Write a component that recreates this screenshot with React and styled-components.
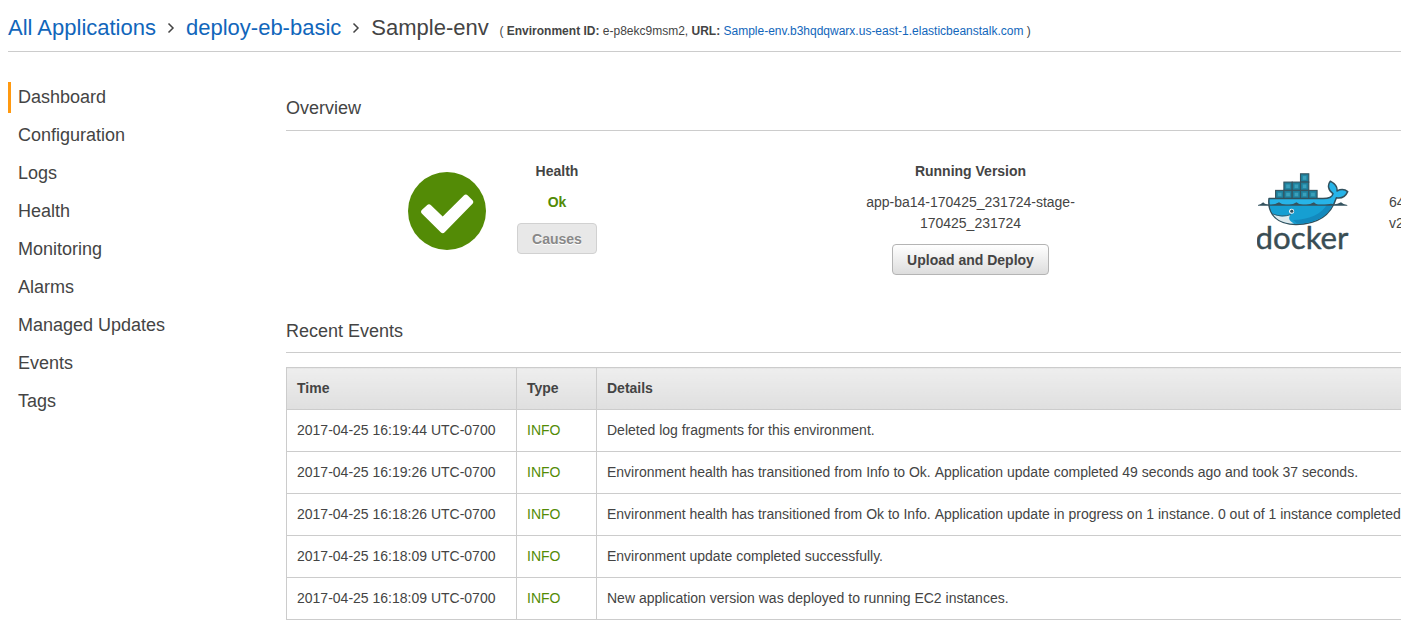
import React from 'react';
import styled, { createGlobalStyle, css } from 'styled-components';

const GREEN = '#538b06';

const GlobalStyle = createGlobalStyle`
  * { box-sizing: border-box; }
  html, body { margin: 0; padding: 0; background: #fff; overflow: hidden; }
  body {
    font-family: "Liberation Sans", Arial, Helvetica, sans-serif;
    font-size: 14px;
    line-height: 21px;
    color: #444;
  }
`;

const Page = styled.div`
  height: 631px;
  padding-left: 8px;
  overflow: hidden;
`;

const Header = styled.header`
  display: flex;
  align-items: baseline;
  height: 52px;
  padding-top: 13px;
  border-bottom: 1px solid #ccc;
  font-size: 22px;
  line-height: 30px;
  white-space: nowrap;
`;

const Link = styled.a`
  color: #1166bb;
  text-decoration: none;
`;

const Separator = styled.svg`
  width: 8px;
  height: 12px;
  margin: 0 11px;
  transform: translateY(-1px);
  fill: none;
  stroke: #444;
  stroke-width: 1.5;
`;

const EnvInfo = styled.span`
  margin-left: 10.75px;
  font-size: 12px;
`;

const Body = styled.div`
  display: flex;
`;

const Nav = styled.nav`
  flex: 0 0 278px;
  display: flex;
  flex-direction: column;
  gap: 7px;
  padding-top: 30px;
`;

const NavItem = styled.a`
  height: 31px;
  padding-left: 7px;
  border-left: 3px solid ${(p) => (p.$active ? '#ff9910' : 'transparent')};
  font-size: 18px;
  line-height: 30px;
`;

const Main = styled.main`
  flex: 1 0 1300px;
  padding-top: 42px;
`;

const SectionTitle = styled.h2`
  height: ${(p) => p.$height || 37}px;
  margin: 0;
  border-bottom: 1px solid #ccc;
  font-size: 18px;
  font-weight: normal;
  line-height: 28px;
`;

const Overview = styled.section`
  display: flex;
  height: 186px;
  padding: 30px 0 0 122px;
`;

const StatusIcon = styled.svg`
  flex: none;
  width: 78px;
  height: 78px;
  margin: 11px 31px 0 0;
`;

const Panel = styled.div`
  flex: none;
  width: ${(p) => p.$width}px;
  margin-right: ${(p) => p.$gap || 0}px;
  text-align: center;
`;

const PanelTitle = styled.div`
  margin-bottom: 10px;
  font-weight: bold;
`;

const Status = styled.div`
  color: ${GREEN};
  font-weight: bold;
`;

const Button = styled.button`
  height: 31px;
  margin-top: 10px;
  padding: 2px 14px 0;
  border: 1px solid #b4b4b4;
  border-radius: 4px;
  background: linear-gradient(#fff, #ddd);
  color: #444;
  font: bold 14px/27px "Liberation Sans", Arial, sans-serif;
  white-space: nowrap;
  ${(p) =>
    p.disabled &&
    css`
      border-color: #d1d1d1;
      background: #e8e8e8;
      color: #888;
      text-shadow: 0 1px 0 #fff;
    `}
`;

const DockerMark = styled.svg`
  flex: none;
  width: 94px;
  height: 84px;
  margin: 11px 38px 0 1px;
`;

const Platform = styled.div`
  padding-top: 31px;
`;

const Table = styled.table`
  width: 100%;
  margin-top: 14px;
  border-collapse: collapse;
  table-layout: fixed;
`;

const HeadCell = styled.th`
  width: ${(p) => (p.$width ? `${p.$width}px` : 'auto')};
  height: 42px;
  padding: 0 10px;
  border: 1px solid #ccc;
  background: linear-gradient(#eee, #dfdfdf);
  text-align: left;
`;

const Cell = styled.td`
  height: 42px;
  padding: 0 10px;
  border: 1px solid #ccc;
  color: ${(p) => (p.$info ? GREEN : 'inherit')};
  white-space: nowrap;
`;

const Sentence = styled.span`
  display: inline-block;
  margin-right: 0.278em;
`;

const NAV = ['Dashboard', 'Configuration', 'Logs', 'Health', 'Monitoring', 'Alarms', 'Managed Updates', 'Events', 'Tags'];

const EVENTS = [
  ['2017-04-25 16:19:44 UTC-0700', ['Deleted log fragments for this environment.']],
  [
    '2017-04-25 16:19:26 UTC-0700',
    ['Environment health has transitioned from Info to Ok.', 'Application update completed 49 seconds ago and took 37 seconds.'],
  ],
  [
    '2017-04-25 16:18:26 UTC-0700',
    ['Environment health has transitioned from Ok to Info.', 'Application update in progress on 1 instance.', '0 out of 1 instance completed'],
  ],
  ['2017-04-25 16:18:09 UTC-0700', ['Environment update completed successfully.']],
  ['2017-04-25 16:18:09 UTC-0700', ['New application version was deployed to running EC2 instances.']],
];

const Chevron = () => (
  <Separator viewBox="0 0 8 12">
    <path d="M1.5 1.5 6 6 1.5 10.5" />
  </Separator>
);

const CONTAINERS = [
  [3, 0], [1, 1], [2, 1], [3, 1],
  [0, 2], [1, 2], [2, 2], [3, 2], [4, 2],
];

function DockerLogo() {
  return (
    <DockerMark viewBox="0 0 94 84">
      <g stroke="#35535f" strokeWidth="1.1">
        {CONTAINERS.map(([col, row]) => (
          <g key={`${col}-${row}`} transform={`translate(${18.6 + col * 8.3} ${1.8 + row * 8.3})`}>
            <rect width="8.3" height="8.3" fill="#1d7f9c" />
            <rect x="2" y="2" width="4.3" height="4.3" fill="#3aa0bb" stroke="#25839f" strokeWidth=".6" />
          </g>
        ))}
      </g>
      <path
        d="M12 26.6H66C71.5 26.6 75.4 25 76 21.6C70.8 18 70.4 12.8 73.3 9.2C78.4 12 80.6 15.2 80 19C84 17 88 17.4 90.7 19.6C88.4 24.8 84 26.6 79.4 25.8C74.8 40.2 63.5 52.4 39 52.4C21.5 52.4 10.2 43 12 26.6Z"
        fill="#27b4e8"
        stroke="#31515e"
        strokeWidth="1.5"
        strokeLinejoin="round"
      />
      <path d="M12.7 32.6H76C70 44.4 59 51.6 40 51.6C23 51.6 13.4 43.6 12.7 32.6Z" fill="#169fd2" />
      <path d="M36 48C52 48 65 42 70 32.6H76C70 44.4 59 51.6 40 51.6Z" fill="#1389bd" />
      <path d="M15.8 42C21 44.8 28 45.2 33.5 42.8C31 46 32 49 37 51.6C28 51.6 20 48.6 15.8 42Z" fill="#dfeaed" />
      <path d="M15.8 42Q25 45.6 34 42.6" fill="none" stroke="#31515e" strokeWidth=".8" />
      <circle cx="34.6" cy="39.2" r="2.5" fill="#fff" />
      <circle cx="34.8" cy="39.2" r="1.6" fill="#31515e" />
      <path
        d="M1 33Q4 32.5 6.2 30.2Q8 32.5 13 32.4Q18 32.7 22 30.2Q25 33 31 32.4Q36 32.7 39.5 30.2Q42 33 48 32.4Q53 32.7 57 30.2Q59 33 65 32.4Q70 32.7 74 31.8Q79 33 84 30.2Q86 32.4 90.3 33V33.8H1Z"
        fill="#35535f"
      />
      <text
        x="-1.5"
        y="77.2"
        textLength="93"
        lengthAdjust="spacingAndGlyphs"
        fontFamily="Lato, sans-serif"
        fontSize="30.5"
        fill="#394d54"
        stroke="#394d54"
        strokeWidth=".4"
        strokeLinejoin="round"
      >
        docker
      </text>
    </DockerMark>
  );
}

export default function App() {
  return (
    <Page>
      <GlobalStyle />
      <Header>
        <Link>All Applications</Link>
        <Chevron />
        <Link>deploy-eb-basic</Link>
        <Chevron />
        <span>Sample-env</span>
        <EnvInfo>
          ( <b>Environment ID:</b> e-p8ekc9msm2, <b>URL:</b>{' '}
          <Link>Sample-env.b3hqdqwarx.us-east-1.elasticbeanstalk.com</Link> )
        </EnvInfo>
      </Header>
      <Body>
        <Nav>
          {NAV.map((name, i) => (
            <NavItem key={name} $active={i === 0}>{name}</NavItem>
          ))}
        </Nav>
        <Main>
          <SectionTitle>Overview</SectionTitle>
          <Overview>
            <StatusIcon viewBox="0 0 78 78">
              <circle cx="39" cy="39" r="39" fill={GREEN} />
              <path
                d="M19 33.3Q21 31.3 23 33.3L34.7 44.6 55.8 23.6Q57.8 21.6 59.8 23.6L64.3 28.1Q66.3 30.1 64.3 32.1L36.7 60.3Q34.7 62.3 32.7 60.3L14 41.8Q12 39.8 14 37.8Z"
                fill="#fff"
              />
            </StatusIcon>
            <Panel $width={80} $gap={252}>
              <PanelTitle>Health</PanelTitle>
              <Status>Ok</Status>
              <Button disabled>Causes</Button>
            </Panel>
            <Panel $width={243} $gap={164}>
              <PanelTitle>Running Version</PanelTitle>
              <div>app-ba14-170425_231724-stage-170425_231724</div>
              <Button>Upload and Deploy</Button>
            </Panel>
            <DockerLogo />
            <Platform>
              64
              <br />
              v2
            </Platform>
          </Overview>
          <SectionTitle $height={36}>Recent Events</SectionTitle>
          <Table>
            <thead>
              <tr>
                <HeadCell $width={230}>Time</HeadCell>
                <HeadCell $width={80}>Type</HeadCell>
                <HeadCell>Details</HeadCell>
              </tr>
            </thead>
            <tbody>
              {EVENTS.map(([time, details]) => (
                <tr key={details[0]}>
                  <Cell>{time}</Cell>
                  <Cell $info>INFO</Cell>
                  <Cell>
                    {details.map((text) => (
                      <Sentence key={text}>{text}</Sentence>
                    ))}
                  </Cell>
                </tr>
              ))}
            </tbody>
          </Table>
        </Main>
      </Body>
    </Page>
  );
}
